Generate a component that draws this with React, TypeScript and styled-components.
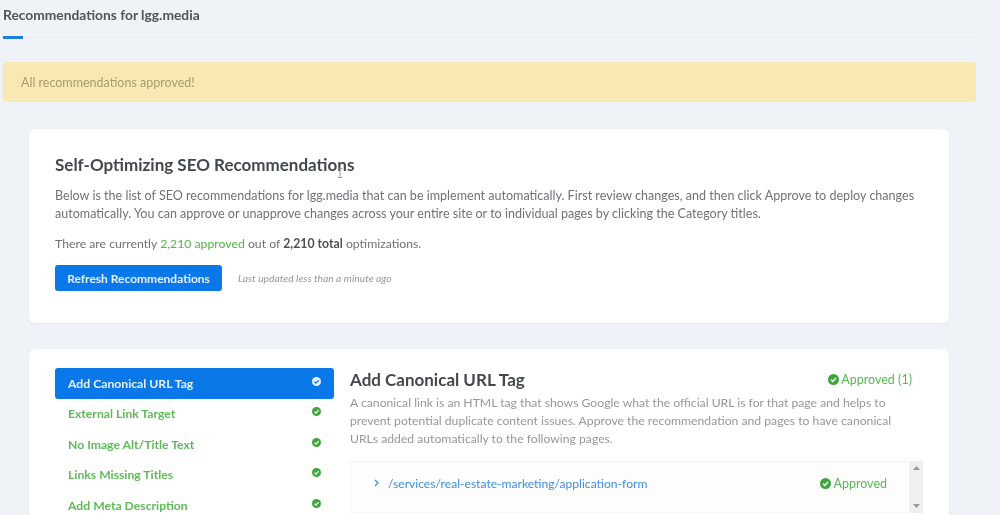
import * as React from 'react';
import styled, { createGlobalStyle } from 'styled-components';

const GlobalStyle = createGlobalStyle`
  html, body {
    margin: 0;
    padding: 0;
    height: 515px;
    overflow: hidden;
    background: #eff3f8;
  }
`;

const Page = styled.div`
  width: 1000px;
  height: 515px;
  overflow: hidden;
  box-sizing: border-box;
  padding-left: 3px;
  font-family: 'Lato', 'Open Sans', sans-serif;
  color: #6b7075;
  filter: blur(0.4px);
`;

const TabBar = styled.div`
  width: 975px;
  height: 37px;
  border-bottom: 1px solid #e8ebf0;
  position: relative;
`;

const TabTitle = styled.div`
  padding-top: 5px;
  font-size: 13.8px;
  line-height: 20px;
  font-weight: 700;
  color: #50555c;
`;

const TabMark = styled.div`
  position: absolute;
  left: 0;
  bottom: -2px;
  width: 20px;
  height: 3px;
  background: #1b7fe0;
`;

const Alert = styled.div`
  width: 973px;
  height: 40px;
  margin-top: 24px;
  box-sizing: border-box;
  padding-left: 18px;
  display: flex;
  align-items: center;
  background: #f8e9b4;
  border-radius: 4px;
  font-size: 12.5px;
  color: #a89d6e;
`;

const Card = styled.section`
  width: 920px;
  margin-left: 26px;
  box-sizing: border-box;
  background: #fff;
  border-radius: 6px;
  box-shadow: 0 1px 3px rgba(60, 80, 110, 0.06);
`;

const IntroCard = styled(Card)`
  height: 194px;
  margin-top: 27px;
  padding: 26px 26px 0;
`;

const IntroTitle = styled.h2`
  margin: 0;
  font-size: 17px;
  line-height: 20px;
  font-weight: 700;
  color: #43484e;
`;

const Para = styled.p`
  margin: 12px 0 0;
  font-size: 12.55px;
  line-height: 18px;
  color: #6d7277;
`;

const CountLine = styled(Para)`
  font-size: 12.25px;
`;

const Green = styled.span`
  color: #4fb548;
`;

const Strong = styled.span`
  color: #4d5257;
  font-weight: 700;
`;

const RefreshRow = styled.div`
  margin-top: 12px;
  display: flex;
  align-items: center;
  gap: 16px;
`;

const RefreshButton = styled.button`
  width: 167px;
  height: 26px;
  padding: 0;
  border: 0;
  border-radius: 3px;
  background: #0a78e8;
  color: #e6f1fd;
  font-family: inherit;
  font-size: 12px;
  font-weight: 700;
`;

const Updated = styled.span`
  font-size: 10.3px;
  font-style: italic;
  color: #94989d;
`;

const DetailCard = styled(Card)`
  height: 300px;
  margin-top: 26px;
  padding: 19px 26px 0;
  display: grid;
  grid-template-columns: 279px 1fr;
  column-gap: 16px;
  align-items: start;
`;

const SideNav = styled.nav`
  display: flex;
  flex-direction: column;
`;

const NavItem = styled.div<{ $active?: boolean }>`
  height: 30.5px;
  box-sizing: border-box;
  padding: 0 13px 0 13px;
  display: flex;
  align-items: center;
  justify-content: space-between;
  border-radius: 3px;
  font-size: 12.2px;
  font-weight: 700;
  background: ${(p) => (p.$active ? '#0a78e8' : 'transparent')};
  color: ${(p) => (p.$active ? '#e6f1fd' : '#5dbb57')};

  svg {
    margin-bottom: 4px;
  }
`;

const Detail = styled.div`
  min-width: 0;
`;

const DetailHead = styled.div`
  display: flex;
  align-items: center;
  justify-content: space-between;
  padding-right: 11px;
  height: 22px;
`;

const DetailTitle = styled.h3`
  margin: 0;
  font-size: 17px;
  font-weight: 700;
  color: #43484e;
`;

const Status = styled.span`
  display: inline-flex;
  align-items: center;
  gap: 2px;
  padding-top: 1px;
  font-size: 12.5px;
  color: #57b951;
`;

const DetailText = styled.p`
  margin: 4px 0 0;
  font-size: 12.2px;
  line-height: 18px;
  color: #94989c;
`;

const PageList = styled.div`
  margin-top: 13px;
  width: 573px;
  height: 52px;
  display: flex;
  background: #fdfdfd;
  box-shadow: inset 0 0 0 1px #f5f6f7;
`;

const PageRow = styled.div`
  flex: 1;
  display: flex;
  align-items: center;
  justify-content: space-between;
  padding: 0 22px 8px 24px;
`;

const PageLink = styled.span`
  display: inline-flex;
  align-items: center;
  gap: 8px;
  font-size: 12.1px;
  color: #3f8fd8;
`;

const ScrollTrack = styled.div`
  width: 14px;
  display: flex;
  flex-direction: column;
  justify-content: space-between;
  align-items: center;
  padding: 5px 0;
  box-sizing: border-box;
  background: #efefef;
`;

const Cursor = styled.svg`
  position: absolute;
  left: 337px;
  top: 168px;
`;

const CheckIcon: React.FC<{ size: number; color: string; mark: string }> = ({ size, color, mark }) => (
  <svg width={size} height={size} viewBox="0 0 16 16">
    <circle cx="8" cy="8" r="8" fill={color} />
    <path d="M4.4 8.3l2.5 2.5 4.8-5" fill="none" stroke={mark} strokeWidth="2.2" />
  </svg>
);

const Arrow: React.FC<{ up?: boolean }> = ({ up }) => (
  <svg width="7" height="4" viewBox="0 0 7 4">
    <path d={up ? 'M0 4L3.5 0 7 4z' : 'M0 0L7 0 3.5 4z'} fill="#9b9b9b" />
  </svg>
);

const navItems = [
  'Add Canonical URL Tag',
  'External Link Target',
  'No Image Alt/Title Text',
  'Links Missing Titles',
  'Add Meta Description',
];

export default function App() {
  return (
    <Page>
      <GlobalStyle />
      <TabBar>
        <TabTitle>Recommendations for lgg.media</TabTitle>
        <TabMark />
      </TabBar>
      <Alert>All recommendations approved!</Alert>

      <IntroCard>
        <IntroTitle>Self-Optimizing SEO Recommendations</IntroTitle>
        <Para>
          Below is the list of SEO recommendations for lgg.media that can be implement automatically. First review changes, and then click Approve to deploy changes
          <br />
          automatically. You can approve or unapprove changes across your entire site or to individual pages by clicking the Category titles.
        </Para>
        <CountLine>
          There are currently <Green>2,210 approved</Green> out of <Strong>2,210 total</Strong> optimizations.
        </CountLine>
        <RefreshRow>
          <RefreshButton>Refresh Recommendations</RefreshButton>
          <Updated>Last updated less than a minute ago</Updated>
        </RefreshRow>
      </IntroCard>

      <DetailCard>
        <SideNav>
          {navItems.map((item, i) => (
            <NavItem key={item} $active={i === 0}>
              {item}
              <CheckIcon size={9} color={i === 0 ? '#e6f1fd' : '#3fa63c'} mark={i === 0 ? '#0a78e8' : '#fff'} />
            </NavItem>
          ))}
        </SideNav>
        <Detail>
          <DetailHead>
            <DetailTitle>Add Canonical URL Tag</DetailTitle>
            <Status>
              <CheckIcon size={11} color="#3fa63c" mark="#fff" />
              Approved (1)
            </Status>
          </DetailHead>
          <DetailText>
            A canonical link is an HTML tag that shows Google what the official URL is for that page and helps to
            <br />
            prevent potential duplicate content issues. Approve the recommendation and pages to have canonical
            <br />
            URLs added automatically to the following pages.
          </DetailText>
          <PageList>
            <PageRow>
              <PageLink>
                <svg width="6" height="8" viewBox="0 0 6 8">
                  <path d="M1 1l3 3-3 3" fill="none" stroke="#3f8fd8" strokeWidth="1.3" />
                </svg>
                /services/real-estate-marketing/application-form
              </PageLink>
              <Status>
                <CheckIcon size={11} color="#3fa63c" mark="#fff" />
                Approved
              </Status>
            </PageRow>
            <ScrollTrack>
              <Arrow up />
              <Arrow />
            </ScrollTrack>
          </PageList>
        </Detail>
      </DetailCard>

      <Cursor width="6" height="10" viewBox="0 0 6 10">
        <path d="M0.5 0.5h5M3 0.5v9M0.5 9.5h5" stroke="#8a8a8a" strokeWidth="0.8" fill="none" />
      </Cursor>
    </Page>
  );
}
